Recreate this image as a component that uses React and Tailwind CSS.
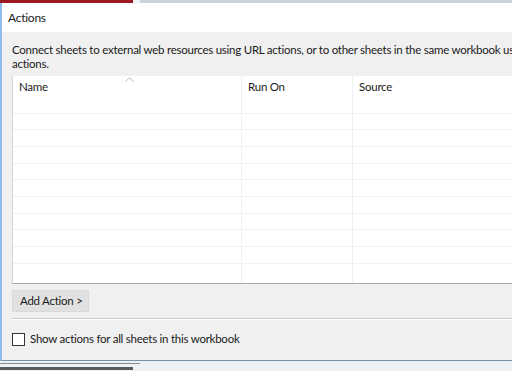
import React from 'react';

const rows = Array.from({ length: 10 });

const App = () => {
  return (
    <div className="w-[512px] h-[371px] overflow-hidden bg-[#eef1f4] flex flex-col font-['Lato',sans-serif] text-[11.5px] tracking-[-0.25px] text-[#1a1a1a]">
      {/* window behind the dialog */}
      <div className="flex h-[3px] shrink-0">
        <div className="w-[133px] bg-[#9d1820]" />
        <div className="w-[7px] bg-[#f4f4f4]" />
        <div className="flex-1 bg-[#c9d3dc]" />
      </div>

      <div className="w-[600px] h-[358px] shrink-0 flex flex-col border-l-2 border-b border-l-[#8dbde8] border-b-[#7891a8] bg-[#f0f0f0]">
        <div className="h-[29px] shrink-0 bg-white flex items-center px-[6px] text-[12px]">Actions</div>

        <div className="flex-1 flex flex-col px-[10px] pt-[11px]">
          <div className="leading-[14px]">
            <div className="whitespace-nowrap">
              Connect sheets to external web resources using URL actions, or to other sheets in the same workbook using filter and highlight
            </div>
            <div>actions.</div>
          </div>

          <div className="relative mt-[5px] h-[208px] bg-white border-l border-b border-l-[#d4d4d4] border-b-[#a9a9a9] flex">
            <svg className="absolute left-[112px] top-[1px]" width="9" height="5" viewBox="0 0 9 5">
              <polyline points="0.5,4.5 4.5,0.8 8.5,4.5" fill="none" stroke="#b9b9b9" strokeWidth="1" />
            </svg>
            {[
              { name: 'Name', w: 'w-[229px]' },
              { name: 'Run On', w: 'w-[111px]' },
              { name: 'Source', w: 'w-[250px]' },
            ].map((col, i) => (
              <div key={col.name} className={`${col.w} shrink-0 flex flex-col ${i < 2 ? 'border-r border-r-[#f1f1f1]' : ''}`}>
                <div className="h-[36.7px] shrink-0 px-[6px] pt-[4px] leading-[14px]">{col.name}</div>
                {rows.map((_, r) => (
                  <div key={r} className="h-[16.67px] shrink-0 border-t border-t-[#f1f1f1]" />
                ))}
              </div>
            ))}
          </div>

          <div className="mt-[6px] mb-[6px] h-[22px]">
            <button className="w-[77px] h-[22px] bg-[#e1e1e1] border border-[#d9d9d9] text-left pl-[7px] leading-[20px] whitespace-nowrap">
              Add Action &gt;
            </button>
          </div>

          <div className="h-[2px] shrink-0 border-t border-t-[#c9c9c9] border-b border-b-white" />

          <div className="flex items-center mt-[12px]">
            <div className="w-[13px] h-[13px] bg-white border border-[#333333]" />
            <span className="ml-[5px] leading-[14px]">Show actions for all sheets in this workbook</span>
          </div>
        </div>
      </div>

      <div className="relative flex-1">
        <div className="absolute left-0 top-[2px] w-[140px] h-[1px] bg-[#8a8a8a]" />
        <div className="absolute left-0 top-[6px] w-[133px] h-[3px] bg-[#5a5a5a]" />
      </div>
    </div>
  );
};

export default App;
